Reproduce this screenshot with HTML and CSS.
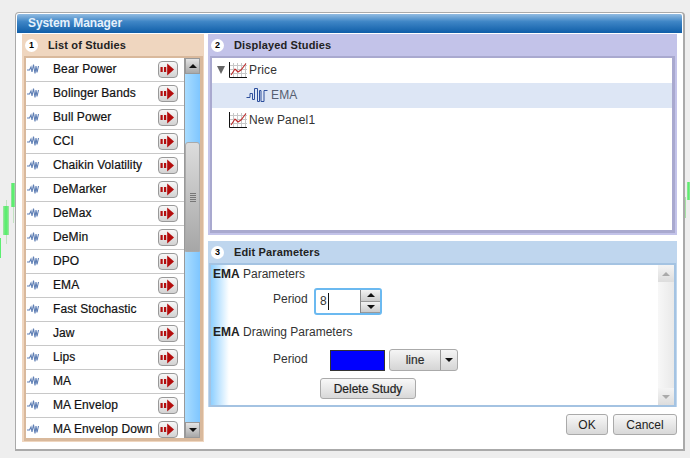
FILE: index.html
```html
<!DOCTYPE html>
<html lang="en">
<head>
<meta charset="utf-8">
<title>System Manager</title>
<link rel="stylesheet" href="styles.css">
</head>
<body>
<div class="backdrop">
  <i class="candle c1"></i><i class="candle c2"></i><i class="candle c3"></i><i class="candle c4"></i>
</div>
<svg width="0" height="0" class="defs">
  <symbol id="wave" viewBox="0 0 12 12"><path d="M0 7H2.500L4 4 5 9 6.500 1.500 8 10.500 9 3 10 9.500 11.500 3" fill="none" stroke="#5f7fb5" stroke-width="1.100"/></symbol>
  <symbol id="go" viewBox="0 0 18 15"><rect x="1.500" y="5" width="2.200" height="5" fill="#b40d0d"/><rect x="5" y="5" width="2.200" height="5" fill="#b40d0d"/><path d="M8.200 1.500 15 7.500 8.200 13.500Z" fill="#b40d0d"/></symbol>
  <symbol id="chart" viewBox="0 0 18 16"><path d="M4.500 1V15M8.500 1V15M12.500 1V15M16.500 1V15M1 3.500H18M1 7.500H18M1 11.500H18" stroke="#c8c8c8" stroke-width="1" fill="none"/><path d="M.5 0V15.500H18" stroke="#111" fill="none"/><path d="M2 13 6 7 9 10 12 8 17 1.500" stroke="#c02828" stroke-width="1.100" fill="none"/></symbol>
  <symbol id="ema" viewBox="0 0 22 16"><path d="M.5 10.500H4V6.500H6.500V12.500H8.500V1.500H11.500V14.500H13.500V3.500H15V14.500H18V3.500H21.500" fill="none" stroke="#2d4f9c" stroke-width="1"/></symbol>
</svg>
<main class="dialog">
  <header class="titlebar">System Manager</header>
  <div class="content">
    <section class="panel studies">
      <h2 class="panel-head"><span class="num">1</span>List of Studies</h2>
      <div class="list-frame">
        <ul class="list">
          <li><svg class="wave"><use href="#wave"/></svg><span class="name">Bear Power</span><button class="go"><svg><use href="#go"/></svg></button></li>
          <li><svg class="wave"><use href="#wave"/></svg><span class="name">Bolinger Bands</span><button class="go"><svg><use href="#go"/></svg></button></li>
          <li><svg class="wave"><use href="#wave"/></svg><span class="name">Bull Power</span><button class="go"><svg><use href="#go"/></svg></button></li>
          <li><svg class="wave"><use href="#wave"/></svg><span class="name">CCI</span><button class="go"><svg><use href="#go"/></svg></button></li>
          <li><svg class="wave"><use href="#wave"/></svg><span class="name">Chaikin Volatility</span><button class="go"><svg><use href="#go"/></svg></button></li>
          <li><svg class="wave"><use href="#wave"/></svg><span class="name">DeMarker</span><button class="go"><svg><use href="#go"/></svg></button></li>
          <li><svg class="wave"><use href="#wave"/></svg><span class="name">DeMax</span><button class="go"><svg><use href="#go"/></svg></button></li>
          <li><svg class="wave"><use href="#wave"/></svg><span class="name">DeMin</span><button class="go"><svg><use href="#go"/></svg></button></li>
          <li><svg class="wave"><use href="#wave"/></svg><span class="name">DPO</span><button class="go"><svg><use href="#go"/></svg></button></li>
          <li><svg class="wave"><use href="#wave"/></svg><span class="name">EMA</span><button class="go"><svg><use href="#go"/></svg></button></li>
          <li><svg class="wave"><use href="#wave"/></svg><span class="name">Fast Stochastic</span><button class="go"><svg><use href="#go"/></svg></button></li>
          <li><svg class="wave"><use href="#wave"/></svg><span class="name">Jaw</span><button class="go"><svg><use href="#go"/></svg></button></li>
          <li><svg class="wave"><use href="#wave"/></svg><span class="name">Lips</span><button class="go"><svg><use href="#go"/></svg></button></li>
          <li><svg class="wave"><use href="#wave"/></svg><span class="name">MA</span><button class="go"><svg><use href="#go"/></svg></button></li>
          <li><svg class="wave"><use href="#wave"/></svg><span class="name">MA Envelop</span><button class="go"><svg><use href="#go"/></svg></button></li>
          <li><svg class="wave"><use href="#wave"/></svg><span class="name">MA Envelop Down</span><button class="go"><svg><use href="#go"/></svg></button></li>
        </ul>
        <div class="vbar">
          <span class="arrow-btn"><i class="tri up"></i></span>
          <div class="track"><span class="thumb"><i class="grip"></i></span></div>
          <span class="arrow-btn"><i class="tri down"></i></span>
        </div>
      </div>
    </section>
    <div class="right">
      <section class="panel displayed">
        <h2 class="panel-head"><span class="num">2</span>Displayed Studies</h2>
        <div class="tree">
          <div class="node"><i class="twist"></i><svg class="chart"><use href="#chart"/></svg><span>Price</span></div>
          <div class="node child"><svg class="ema"><use href="#ema"/></svg><span>EMA</span></div>
          <div class="node leaf"><svg class="chart"><use href="#chart"/></svg><span>New Panel1</span></div>
        </div>
      </section>
      <section class="panel edit">
        <h2 class="panel-head"><span class="num">3</span>Edit Parameters</h2>
        <div class="edit-frame">
          <div class="form">
            <p class="sub"><b>EMA</b> Parameters</p>
            <div class="row">
              <label>Period</label>
              <div class="spin"><span class="spin-val">8<i class="caret"></i></span><span class="spin-btns"><span><i class="tri up"></i></span><span><i class="tri down"></i></span></span></div>
            </div>
            <p class="sub"><b>EMA</b> Drawing Parameters</p>
            <div class="row draw">
              <label>Period</label>
              <span class="swatch"></span>
              <div class="select"><span>line</span><span class="sel-arrow"><i class="tri down"></i></span></div>
            </div>
            <div class="del-row"><button class="btn del">Delete Study</button></div>
          </div>
          <div class="vbar light">
            <span class="arrow-btn"><i class="tri up"></i></span>
            <div class="track"></div>
            <span class="arrow-btn"><i class="tri down"></i></span>
          </div>
        </div>
      </section>
      <div class="actions"><button class="btn ok">OK</button><button class="btn cancel">Cancel</button></div>
    </div>
  </div>
</main>
</body>
</html>
```
FILE: styles.css
```css
* { box-sizing: border-box; }
html, body { margin: 0; height: 100%; }
body {
  width: 690px; height: 458px; overflow: hidden; position: relative;
  background: #eeeeee; font-family: "Liberation Sans", Arial, sans-serif; font-size: 12px; color: #222;
  padding: 12px 5px 6px 15px;
}
.defs { position: absolute; }
.backdrop { position: absolute; inset: 0; }
.candle { position: absolute; background: linear-gradient(90deg, #a6e2a6, #5cee70 35%, #5cee70 65%, #a6e2a6); }
.candle::after { content: ""; position: absolute; left: 50%; width: 1px; background: #c2e2c2; }
.c1 { left: 3px; top: 206px; width: 6px; height: 29px; }
.c1::after { top: -6px; height: 44px; z-index: -1; }
.c2 { left: 11px; top: 183px; width: 4px; height: 24px; }
.c2::after { top: 24px; height: 16px; }
.c3 { left: 0; top: 238px; width: 1px; height: 20px; }
.c4 { left: 687px; top: 182px; width: 3px; height: 18px; }
.c4::after { left: -2px; top: 15px; height: 21px; background: #a6e2a6; }

.dialog {
  position: relative; width: 670px; height: 439px;
  background: #fff; border: 1px solid #aaa; border-right-width: 2px; border-bottom-width: 2px;
  border-radius: 4px 4px 0 0; padding: 1px;
  display: flex; flex-direction: column;
}
.titlebar {
  height: 19px; padding: 1px 0 0 11px; flex: none;
  background: linear-gradient(#92bce2, #3f86c6 40%, #0f5ea8);
  color: #e6f1fb; font-weight: bold; font-size: 12px; line-height: 16px; letter-spacing: -.1px;
  border-radius: 2px 2px 0 0;
}
.content { flex: 1; display: flex; gap: 4px; padding: 1px 5px 0 5px; min-height: 0; }
.panel { display: flex; flex-direction: column; }
.panel-head {
  margin: 0; height: 22px; display: flex; align-items: center; font-size: 11px; font-weight: bold; color: #222; flex: none; letter-spacing: .15px;
}
.num {
  width: 13px; height: 13px; border-radius: 50%; background: #fff; color: #000;
  font-size: 9px; line-height: 13px; text-align: center; font-weight: bold; margin: 0 10px 0 1px; flex: none; letter-spacing: 0;
}
.edit .panel-head { padding-left: 1px; }
.studies { width: 182px; height: 408px; background: #efd6bf; padding: 0 1px 0 2px; }
.list-frame { display: flex; border: 2px solid #d9b99c; border-width: 2px 3px 3px 2px; height: 385px; background: #fff; overflow: hidden; }
.list { list-style: none; margin: 0; padding: 0; width: 158px; flex: none; }
.list li { height: 24px; display: flex; align-items: center; border-bottom: 1px solid #c8c8c8; padding: 0 6px 1px 1px; }
.wave { width: 12px; height: 12px; flex: none; }
.name { margin-left: 14px; flex: 1; font-size: 12px; letter-spacing: .1px; color: #111; -webkit-text-stroke: .2px #111; white-space: nowrap; }
.go {
  width: 20px; height: 17px; padding: 0; border: 1px solid #999; border-radius: 4px;
  background: linear-gradient(#f8f8f8, #d2d2d2); flex: none;
}
.go svg { display: block; width: 18px; height: 15px; }
.vbar { width: 16px; flex: none; display: flex; flex-direction: column; background: #88ccff; border-left: 1px solid #999; }
.arrow-btn { height: 16px; flex: none; display: flex; align-items: center; justify-content: center; background: linear-gradient(#e4e4e4, #a8a8a8); border: 1px solid #999; }
.track { flex: 1; background: linear-gradient(90deg, #a8dcff, #7fc6ff); position: relative; padding-top: 68px; }
.thumb { display: flex; align-items: center; justify-content: center; height: 110px; background: linear-gradient(#dcdcdc, #a6a6a6); border: 1px solid #aaa; border-radius: 3px 3px 0 0; }
.grip { width: 6px; height: 9px; background: repeating-linear-gradient(#777 0 1px, transparent 1px 2px); }
.tri { display: block; width: 0; height: 0; border-left: 4px solid transparent; border-right: 4px solid transparent; }
.tri.up { border-bottom: 4px solid #111; }
.tri.down { border-top: 4px solid #111; }

.right { flex: 1; display: flex; flex-direction: column; min-width: 0; }
.displayed { height: 201px; background: #c3c3e9; padding: 0 2px 0 2px; flex: none; }
.tree { height: 177px; background: #fff; border: 2px solid #a9a9cf; border-width: 2px 3px 3px 2px; }
.node { height: 25px; display: flex; align-items: center; font-size: 12px; color: #333; padding: 0 0 2px 5px; letter-spacing: .15px; }
.twist { width: 0; height: 0; border-left: 4px solid transparent; border-right: 4px solid transparent; border-top: 8px solid #666; margin-right: 4px; }
.chart { width: 18px; height: 16px; margin-right: 2px; flex: none; }
.child { background: #dde6f5; padding-left: 34px; color: #555e70; }
.ema { width: 22px; height: 16px; flex: none; margin-right: 3px; }
.leaf { padding-left: 17px; }
.edit { height: 166px; margin-top: 6px; background: #bfd6ee; padding: 0 1px 0 1px; flex: none; }
.edit-frame { display: flex; height: 144px; border: 2px solid #a4c3e2; background: linear-gradient(90deg, #8fd0ff, #fff 18px); }
.form { flex: 1; min-width: 0; padding: 1px 0 0 2px; }
.sub { margin: 0; font-size: 12px; height: 17px; line-height: 16px; color: #333; }
.sub b { color: #222; }
.row { display: flex; align-items: center; padding-left: 60px; height: 27px; margin: 5px 0 9px; color: #333; }
.row label { width: 41px; padding-bottom: 6px; }
.row.draw { margin: 8px 0 0; height: 22px; }
.row.draw label { width: 57px; padding-bottom: 2px; }
.spin { display: flex; width: 68px; height: 27px; border: 2px solid #6bb9f0; border-radius: 3px; background: #fff; }
.spin-val { flex: 1; padding: 4px 0 0 4px; font-size: 12px; line-height: 14px; display: flex; align-items: flex-start; }
.caret { display: block; width: 1px; height: 17px; background: #111; margin: -1px 0 0 1px; }
.spin-btns { width: 20px; display: flex; flex-direction: column; border-left: 1px solid #888; }
.spin-btns span { flex: 1; display: flex; align-items: center; justify-content: center; background: linear-gradient(#f2f2f2, #ccc); border-bottom: 1px solid #999; }
.swatch { width: 55px; height: 21px; background: #0000ff; border: 1px solid #333; margin: 0 4px 0 0; }
.select { display: flex; width: 69px; height: 22px; border: 1px solid #aaa; border-radius: 3px; background: linear-gradient(#f5f5f5, #d5d5d5); font-size: 12px; -webkit-text-stroke: .2px #222; align-items: center; }
.select > span:first-child { flex: 1; text-align: center; }
.sel-arrow { width: 17px; height: 100%; display: flex; align-items: center; justify-content: center; border-left: 1px solid #999; }
.del-row { padding-left: 107px; margin-top: 7px; }
.btn { border: 1px solid #aaa; border-radius: 3px; background: linear-gradient(#f8f8f8, #d8d8d8); font: 12px "Liberation Sans", Arial, sans-serif; color: #222; padding: 0; height: 21px; }
.del { width: 96px; -webkit-text-stroke: .2px #222; }
.vbar.light { border-left: 0; background: #f0f0f0; width: 16px; }
.vbar.light .arrow-btn { background: linear-gradient(#f4f4f4, #ddd); border: 0; height: 17px; }
.vbar.light .tri.up { border-bottom-color: #aaa; }
.vbar.light .tri.down { border-top-color: #aaa; }
.vbar.light .track { background: linear-gradient(90deg, #f7f7f7, #e9e9e9); padding: 0; }
.actions { display: flex; justify-content: flex-end; gap: 5px; padding: 7px 0 0 0; }
.ok { width: 42px; }
.cancel { width: 64px; }
```
